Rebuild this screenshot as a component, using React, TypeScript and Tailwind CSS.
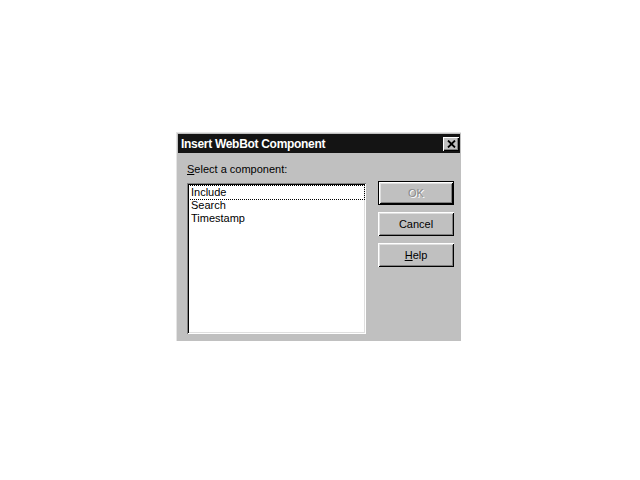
import React from "react";

const font = { fontFamily: '"Liberation Sans", Arial, sans-serif' };

function Btn({ children, def, disabled }: { children: React.ReactNode; def?: boolean; disabled?: boolean }) {
  const inner = (
    <div
      className={
        "flex items-center justify-center w-full h-full text-[11px] leading-none bg-[#c0c0c0] " +
        "shadow-[inset_1px_1px_#ffffff,inset_-1px_-1px_#000000,inset_2px_2px_#dfdfdf,inset_-2px_-2px_#808080]"
      }
    >
      <span
        className={disabled ? "text-[#8a8a8a] [text-shadow:1px_1px_0_#ffffff]" : "text-black"}
      >
        {children}
      </span>
    </div>
  );
  return (
    <div className={"w-[76px] h-[24px] " + (def ? "border border-black" : "")}>{inner}</div>
  );
}

export default function App() {
  return (
    <div className="w-[640px] h-[480px] bg-white pt-[132px] pl-[176px]" style={font}>
      <div className="w-[285px] h-[209px] bg-[#c0c0c0] border-t border-l border-[#e4e4e4] p-[1px] flex flex-col">
        <div className="h-[19px] bg-[#141414] flex items-center justify-between pl-[3px] pr-[1px]">
          <span className="text-white font-bold text-[12px] tracking-[-0.3px] leading-none">
            Insert WebBot Component
          </span>
          <div className="w-[16px] h-[14px] bg-[#c0c0c0] flex items-center justify-center shadow-[inset_1px_1px_#ffffff,inset_-1px_-1px_#000000,inset_-2px_-2px_#808080]">
            <svg width="9" height="8" viewBox="0 0 9 8">
              <path d="M1 0.5 L8 7.5 M8 0.5 L1 7.5" stroke="#000" strokeWidth="1.8" />
            </svg>
          </div>
        </div>
        <div className="flex pl-[9px]">
          <div className="flex flex-col">
            <div className="mt-[10px] h-[13px] text-[11px] leading-[13px] text-black">
              <span className="underline">S</span>elect a component:
            </div>
            <div className="mt-[7px] w-[179px] h-[151px] bg-white p-[2px] shadow-[inset_1px_1px_#808080,inset_-1px_-1px_#ffffff,inset_2px_2px_#000000,inset_-2px_-2px_#dfdfdf]">
              <div className="flex flex-col pt-[1px] text-[11px] text-black">
                <div className="h-[13px] leading-[13px] pl-[2px] outline outline-1 outline-dotted outline-black">
                  Include
                </div>
                <div className="h-[13px] leading-[13px] pl-[2px]">Search</div>
                <div className="h-[13px] leading-[13px] pl-[2px]">Timestamp</div>
              </div>
            </div>
          </div>
          <div className="ml-[12px] mt-[28px] flex flex-col gap-[7px]">
            <Btn def disabled>
              OK
            </Btn>
            <Btn>Cancel</Btn>
            <Btn>
              <span className="underline">H</span>elp
            </Btn>
          </div>
        </div>
      </div>
    </div>
  );
}
